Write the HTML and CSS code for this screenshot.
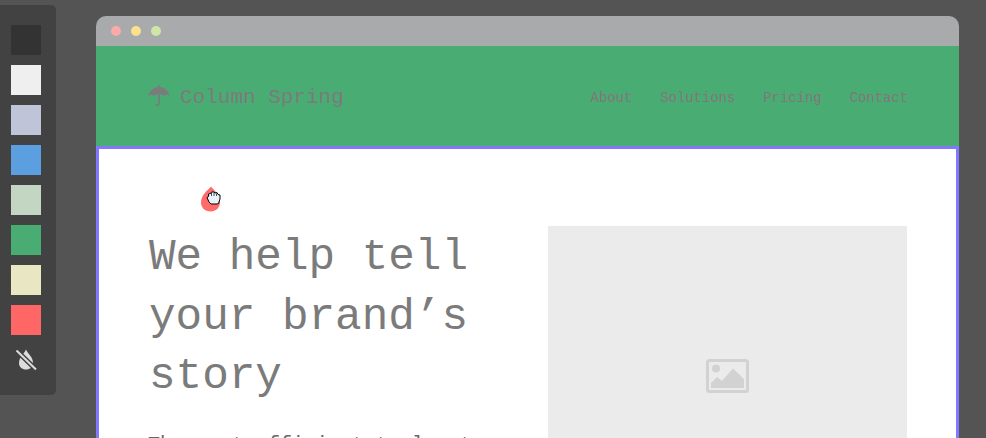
FILE: index.html
```html
<!DOCTYPE html>
<html lang="en">
<head>
    <meta charset="UTF-8">
    <meta name="viewport" content="width=device-width, initial-scale=1.0">
    <title>Column Spring</title>
    <link rel="stylesheet" href="styles.css">
</head>
<body>
    <div class="stage">
        <aside class="palette">
            <span class="swatch swatch-dark"></span>
            <span class="swatch swatch-light"></span>
            <span class="swatch swatch-lilac"></span>
            <span class="swatch swatch-blue"></span>
            <span class="swatch swatch-sage"></span>
            <span class="swatch swatch-green"></span>
            <span class="swatch swatch-sand"></span>
            <span class="swatch swatch-red"></span>
            <svg class="drop-off" width="22" height="24" viewBox="0 0 22 24">
                <path d="M11 1.500C9 6 4 9 4 15C4 19 7 21.500 11 21.500C15 21.500 18 19 18 15C18 9 13 6 11 1.500Z" fill="#dcdcdc"/>
                <path d="M1.500 2.500L21 21.500" stroke="#424242" stroke-width="5"/>
                <path d="M1.500 2.500L21 21.500" stroke="#dcdcdc" stroke-width="2"/>
            </svg>
        </aside>

        <div class="window">
            <div class="titlebar">
                <span class="dot dot-red"></span>
                <span class="dot dot-yellow"></span>
                <span class="dot dot-green"></span>
            </div>
            <header class="site-header">
                <a class="logo">
                    <svg class="logo-icon" width="24" height="24" viewBox="0 0 24 24">
                        <path d="M11.300 1H12.700V3C17.500 3.400 21.500 6.800 23 12C21 10.200 18.500 10.200 16.800 12C15.500 10.500 13.800 10.200 12.800 10.800V19.500C12.800 22.500 7.800 23 7.600 19.500H9C9.200 21 11.300 21 11.300 19.500V10.800C10.200 10.200 8.500 10.500 7.200 12C5.500 10.200 3 10.200 1 12C2.500 6.800 6.500 3.400 11.300 3Z" fill="#7b7b7b"/>
                    </svg>
                    Column Spring
                </a>
                <nav class="nav">
                    <a>About</a>
                    <a>Solutions</a>
                    <a>Pricing</a>
                    <a>Contact</a>
                </nav>
            </header>
            <section class="hero">
                <div class="hero-text">
                    <h1>We help tell your brand’s story</h1>
                    <p>The most efficient tool out there</p>
                </div>
                <div class="hero-image">
                    <svg width="43" height="34" viewBox="0 0 43 34">
                        <rect x="1.500" y="1.500" width="40" height="31" rx="2" fill="none" stroke="#d2d2d2" stroke-width="3"/>
                        <circle cx="10" cy="9.500" r="4" fill="#d2d2d2"/>
                        <path d="M5 29V24L11 18L16 22L27 9.500L38 20V29Z" fill="#d2d2d2"/>
                    </svg>
                </div>
            </section>
        </div>

        <div class="cursor-drop">
            <svg width="21" height="26" viewBox="0 0 21 26">
                <path d="M11 0.500C8 4 1 9 1 16.500C1 21.500 5 25.500 10.500 25.500C16 25.500 20 21.500 20 16.500C20 9 14 4 11 0.500Z" fill="#ff6b6b"/>
            </svg>
            <svg class="hand" width="15" height="14" viewBox="0 0 15 14">
                <path d="M1 6.500L2.500 5.500V3L4.500 2.500L5.500 1H8L9 2L11 1.500L12 3.500L14 4V8L12.500 12.500L11 13H5L3 11Z" fill="#e9f2f8" stroke="#000" stroke-width="1"/>
                <path d="M5.500 2V5M8 2V5M10.500 2.500V5" stroke="#000" stroke-width="0.700"/>
            </svg>
        </div>
    </div>
</body>
</html>
```

FILE: styles.css
```css
*{
    margin: 0;
    padding: 0;
    box-sizing: border-box;
}
html, body{
    height: 100%;
    overflow: hidden;
}
body{
    background: #545454;
    font-family: "Liberation Mono", monospace;
    color: #7b7b7b;
}
.stage{
    position: relative;
    display: flex;
    align-items: flex-start;
    height: 438px;
    overflow: hidden;
}

/* left colour bar */
.palette{
    flex: none;
    width: 56px;
    height: 390px;
    margin-top: 5px;
    margin-right: 40px;
    padding: 20px 0 0 11px;
    background: #424242;
    border-radius: 0 5px 5px 0;
    display: flex;
    flex-direction: column;
    gap: 10px;
}
.swatch{
    display: block;
    width: 30px;
    height: 30px;
}
.swatch-dark{ background: #333333; }
.swatch-light{ background: #efefef; }
.swatch-lilac{ background: #c0c4d9; }
.swatch-blue{ background: #5b9fe0; }
.swatch-sage{ background: #c2d6c1; }
.swatch-green{ background: #49ad73; }
.swatch-sand{ background: #e9e6c4; }
.swatch-red{ background: #ff6666; }
.drop-off{
    display: block;
    margin: 3px 0 0 4px;
}

/* browser window */
.window{
    flex: none;
    width: 863px;
    margin-top: 16px;
}
.titlebar{
    height: 30px;
    padding-left: 15px;
    background: #a9aaab;
    border-radius: 10px 10px 0 0;
    display: flex;
    align-items: center;
    gap: 10px;
}
.dot{
    width: 10px;
    height: 10px;
    border-radius: 50%;
}
.dot-red{ background: #fbaaaa; }
.dot-yellow{ background: #fbe08e; }
.dot-green{ background: #cfe6a8; }

.site-header{
    height: 100px;
    padding: 3px 51px 0 52px;
    background: #49ad73;
    display: flex;
    align-items: center;
    justify-content: space-between;
}
.logo{
    display: flex;
    align-items: center;
    gap: 9px;
    font-size: 21px;
}
.logo-icon{
    margin: 0 0 3px -1px;
}
.nav{
    display: flex;
    gap: 28px;
    font-size: 13.900px;
    color: #82757c;
}

.hero{
    height: 400px;
    padding: 77px 49px 0 49px;
    background: #fff;
    border: 3px solid #8078ff;
    display: flex;
    justify-content: space-between;
}
.hero-text{
    width: 340px;
}
.hero-text h1{
    margin: 2px 0 0 1px;
    font-size: 44.300px;
    font-weight: normal;
    line-height: 59.500px;
}
.hero-text p{
    margin-top: 24px;
    font-size: 20px;
    line-height: 28px;
    color: #666;
}
.hero-image{
    width: 359px;
    height: 300px;
    background: #ebebeb;
    display: flex;
    align-items: center;
    justify-content: center;
}

/* dragged colour under the pointer */
.cursor-drop{
    position: absolute;
    left: 200px;
    top: 186px;
    width: 21px;
    height: 26px;
}
.cursor-drop svg{
    display: block;
}
.cursor-drop .hand{
    position: absolute;
    left: 6px;
    top: 5px;
}
```
